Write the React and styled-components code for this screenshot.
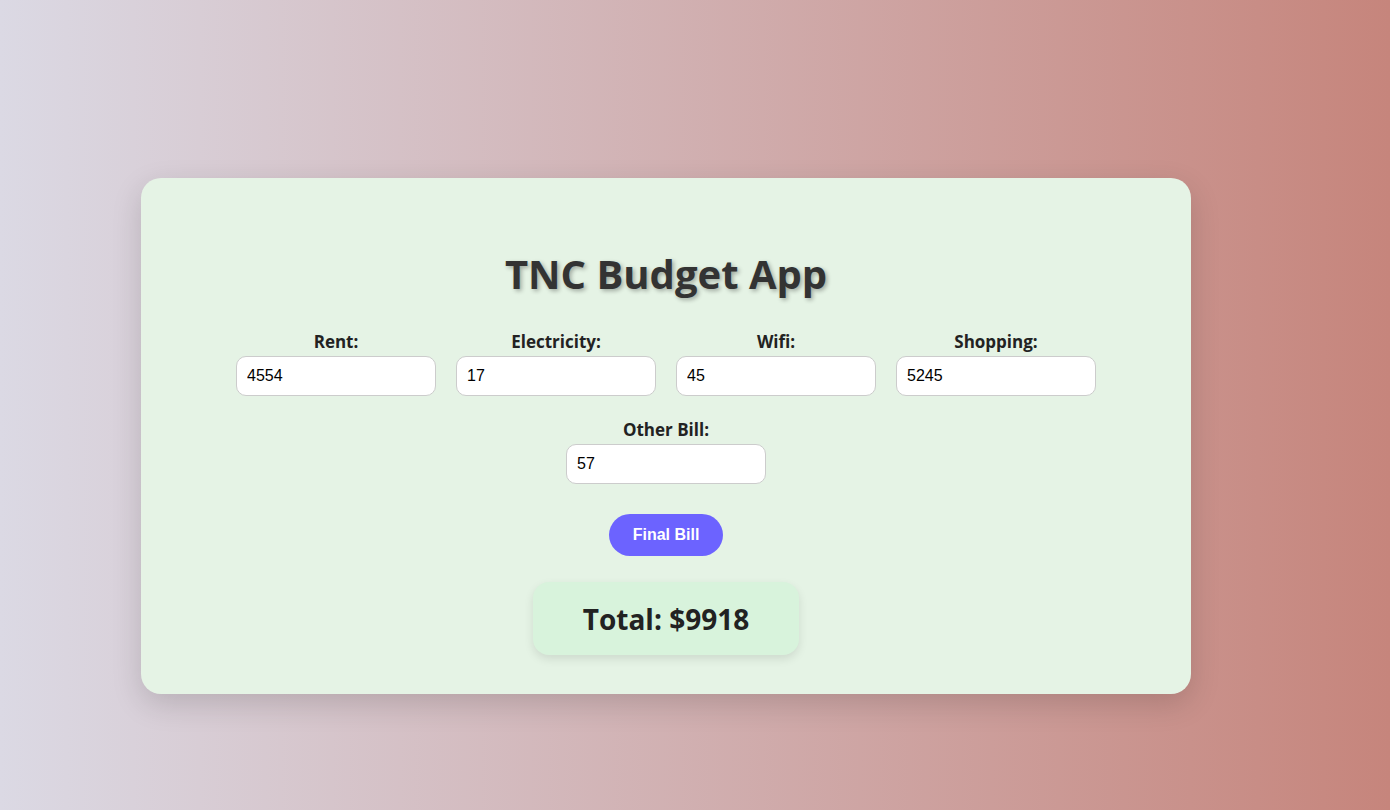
import React, { useState } from "react";
import styled, { createGlobalStyle } from "styled-components";

const GlobalStyle = createGlobalStyle`
  html, body {
    margin: 0;
    padding: 0;
  }
  body {
    font-family: "Open Sans", "Noto Sans", sans-serif;
    background: linear-gradient(to right, #dbd9e4, #c6857c);
    min-height: 100vh;
  }
`;

const fields = [
  { key: "rent", label: "Rent:" },
  { key: "electricity", label: "Electricity:" },
  { key: "wifi", label: "Wifi:" },
  { key: "shopping", label: "Shopping:" },
  { key: "other", label: "Other Bill:" },
];

const App = () => {
  const [values, setValues] = useState({
    rent: "4554",
    electricity: "17",
    wifi: "45",
    shopping: "5245",
    other: "57",
  });
  const [total, setTotal] = useState(9918);

  const handleChange = (key) => (e) => {
    setValues({ ...values, [key]: e.target.value });
  };

  const calcTotal = () => {
    const sum = Object.values(values).reduce(
      (acc, v) => acc + (parseFloat(v) || 0),
      0
    );
    setTotal(sum);
  };

  return (
    <Page>
      <GlobalStyle />
      <Card>
        <Title>TNC Budget App</Title>
        <Fields>
          {fields.map((f) => (
            <Field key={f.key}>
              <Label htmlFor={f.key}>{f.label}</Label>
              <Input
                id={f.key}
                type="text"
                value={values[f.key]}
                onChange={handleChange(f.key)}
              />
            </Field>
          ))}
        </Fields>
        <Button onClick={calcTotal}>Final Bill</Button>
        <TotalBox>Total: ${total}</TotalBox>
      </Card>
    </Page>
  );
};

const Page = styled.div`
  min-height: 810px;
  box-sizing: border-box;
  padding: 178px 0 0 141px;
  display: flex;
  align-items: flex-start;
  justify-content: flex-start;
`;

const Card = styled.div`
  width: 1050px;
  box-sizing: border-box;
  padding: 40px 40px 39px;
  background: #e5f3e5;
  border-radius: 20px;
  box-shadow: 0 10px 30px rgba(0, 0, 0, 0.15);
  display: flex;
  flex-direction: column;
  align-items: center;
`;

const Title = styled.h1`
  font-size: 40px;
  font-weight: 700;
  color: #333;
  text-shadow: 2px 2px 4px rgba(0, 0, 0, 0.3);
  margin: 28px 0 29px;
`;

const Fields = styled.div`
  display: flex;
  flex-wrap: wrap;
  justify-content: center;
  row-gap: 22px;
  width: 100%;
`;

const Field = styled.div`
  display: flex;
  flex-direction: column;
  align-items: center;
  margin: 0 10px;
`;

const Label = styled.label`
  font-size: 17px;
  font-weight: 700;
  color: #222;
  margin-bottom: 3px;
`;

const Input = styled.input`
  width: 200px;
  height: 40px;
  box-sizing: border-box;
  padding: 0 10px;
  border: 1px solid #ccc;
  border-radius: 10px;
  background: #fff;
  font-family: "Liberation Sans", Arial, sans-serif;
  font-size: 16px;
  color: #000;
  outline: none;
`;

const Button = styled.button`
  margin-top: 30px;
  height: 42px;
  padding: 0 24px;
  border: none;
  border-radius: 21px;
  background: #6c63ff;
  color: #fff;
  font-family: "Liberation Sans", Arial, sans-serif;
  font-size: 16px;
  font-weight: 700;
  cursor: pointer;
`;

const TotalBox = styled.div`
  margin-top: 26px;
  width: 266px;
  height: 73px;
  box-sizing: border-box;
  display: flex;
  align-items: center;
  justify-content: center;
  background: #d8f3dc;
  border-radius: 16px;
  box-shadow: 0 4px 10px rgba(0, 0, 0, 0.1);
  font-size: 28px;
  font-weight: 700;
  color: #222;
`;

export default App;
